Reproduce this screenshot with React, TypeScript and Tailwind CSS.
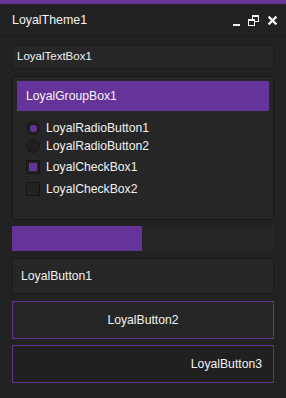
import React from "react";

const font = { fontFamily: '"Liberation Sans", Arial, sans-serif' };

function TitleIcons() {
  return (
    <svg width="46" height="32" viewBox="0 0 46 32" className="ml-auto mr-[8px]" shapeRendering="crispEdges">
      {/* minimize */}
      <rect x="1" y="20" width="7" height="2" fill="#f2f2f2" />
      {/* restore back */}
      <rect x="20" y="11" width="7" height="2" fill="#f2f2f2" />
      <rect x="26" y="11" width="1" height="7" fill="#f2f2f2" />
      <rect x="20" y="11" width="1" height="4" fill="#f2f2f2" />
      <rect x="23" y="17" width="4" height="1" fill="#f2f2f2" />
      {/* restore front */}
      <rect x="16" y="15" width="7" height="2" fill="#f2f2f2" />
      <rect x="16" y="15" width="1" height="7" fill="#f2f2f2" />
      <rect x="22" y="15" width="1" height="7" fill="#f2f2f2" />
      <rect x="16" y="21" width="7" height="1" fill="#f2f2f2" />
      {/* close */}
      <g shapeRendering="geometricPrecision">
        <line x1="36.6" y1="12.6" x2="44.4" y2="20.4" stroke="#f2f2f2" strokeWidth="2.2" />
        <line x1="44.4" y1="12.6" x2="36.6" y2="20.4" stroke="#f2f2f2" strokeWidth="2.2" />
      </g>
    </svg>
  );
}

function Radio({ checked, label }: { checked?: boolean; label: string }) {
  return (
    <div className="flex h-[18px] items-center gap-[6px]">
      <div className="flex h-[14px] w-[14px] items-center justify-center rounded-full border border-[#1a1a1a] bg-[#1f1f1f]">
        {checked && <div className="h-[7px] w-[7px] rounded-full bg-[#663399]" />}
      </div>
      <span className="text-[12.2px] leading-none text-[#f2f2f2]">{label}</span>
    </div>
  );
}

function Check({ checked, label }: { checked?: boolean; label: string }) {
  return (
    <div className="flex h-[18px] items-center gap-[6px]">
      <div className="flex h-[14px] w-[14px] items-center justify-center border border-[#151515] bg-[#222222]">
        {checked && <div className="h-[8px] w-[8px] bg-[#663399]" />}
      </div>
      <span className="text-[12.2px] leading-none text-[#f2f2f2]">{label}</span>
    </div>
  );
}

export default function App() {
  return (
    <div className="flex h-[398px] w-[286px] flex-col bg-[#222222]" style={font}>
      <div className="h-[4px] bg-[#663399]" />
      <div className="flex h-[33px] items-center border-b border-[#1a1a1a] pl-[12px]">
        <span className="text-[12.4px] leading-none text-[#f5f5f5]">LoyalTheme1</span>
        <TitleIcons />
      </div>
      <div className="flex flex-col px-[12px] pt-[8px]">
        <div className="flex h-[24px] items-center border border-[#1c1c1c] bg-[#272727] pl-[4px]">
          <span className="text-[11.5px] leading-none text-[#f2f2f2]">LoyalTextBox1</span>
        </div>
        <div className="mt-[7px] flex h-[144px] flex-col border border-[#181818] bg-[#262626] p-[4px]">
          <div className="flex h-[30px] items-center bg-[#663399] pl-[9px]">
            <span className="text-[12.2px] leading-none text-[#f5f5f5]">LoyalGroupBox1</span>
          </div>
          <div className="flex flex-col pl-[9px] pt-[8px]">
            <Radio checked label="LoyalRadioButton1" />
            <Radio label="LoyalRadioButton2" />
            <div className="mt-[3px]">
              <Check checked label="LoyalCheckBox1" />
            </div>
            <div className="mt-[4px]">
              <Check label="LoyalCheckBox2" />
            </div>
          </div>
        </div>
        <div className="mt-[6px] flex h-[25px] bg-[#262626]">
          <div className="h-full w-[130px] bg-[#663399]" />
        </div>
        <div className="mt-[7px] flex h-[36px] items-center border border-[#1b1b1b] bg-[#272727] pl-[8px]">
          <span className="text-[12.2px] leading-none text-[#f2f2f2]">LoyalButton1</span>
        </div>
        <div className="mt-[7px] flex h-[38px] items-center justify-center border border-[#663399] bg-[#262626]">
          <span className="text-[12.2px] leading-none text-[#f2f2f2]">LoyalButton2</span>
        </div>
        <div className="mt-[6px] flex h-[38px] items-center justify-end border border-[#663399] bg-[#202020] pr-[11px]">
          <span className="text-[12.2px] leading-none text-[#f2f2f2]">LoyalButton3</span>
        </div>
      </div>
    </div>
  );
}
